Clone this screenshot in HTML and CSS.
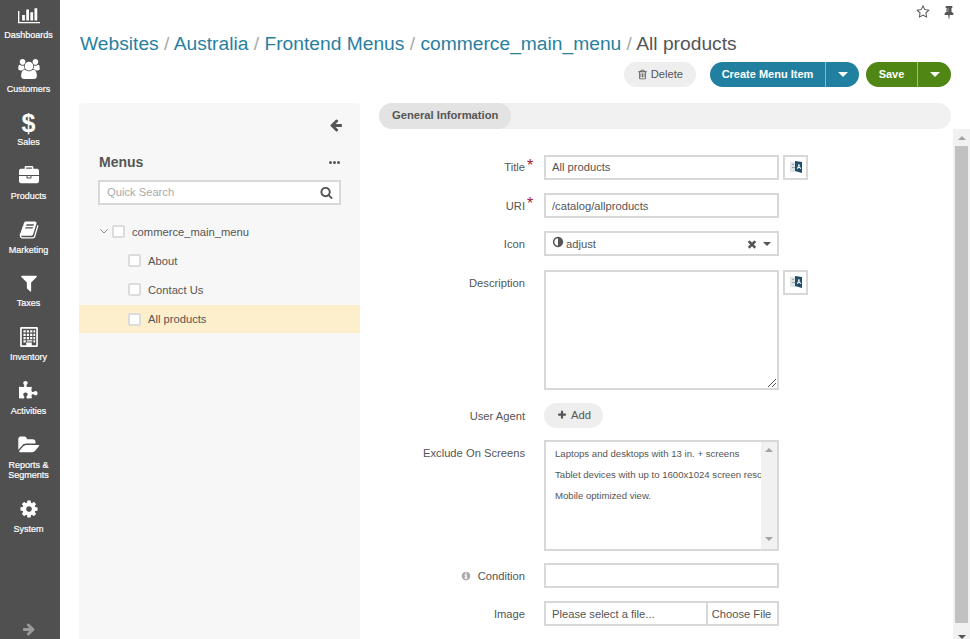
FILE: index.html
```html
<!DOCTYPE html>
<html lang="en">

<head>
    <meta charset="UTF-8">
    <title>All products - Frontend Menus</title>
    <link rel="stylesheet" href="styles.css">
</head>

<body>
    <nav class="sidebar">
        <a class="nav-item"><svg class="nav-icon" viewBox="0 0 2048 1792"><path d="M640 896v512h-256v-512h256zm384-512v1024h-256v-1024h256zm1024 1152v128h-2048v-1152h128v1024h1920zm-640-896v768h-256v-768h256zm384-384v1152h-256v-1152h256z"/></svg><span>Dashboards</span></a>
        <a class="nav-item"><svg class="nav-icon" viewBox="0 0 1920 1792"><path d="M593 896q-162 5-265 128h-134q-82 0-138-40.5t-56-118.5q0-353 124-353 6 0 43.5 21t97.5 42.5 119 21.5q67 0 133-23-5 37-5 66 0 139 81 256zm1071 637q0 120-73 189.5t-194 69.5h-874q-121 0-194-69.5t-73-189.5q0-53 3.5-103.5t14-109 26.5-108.5 43-97.5 62-81 85.5-53.5 111.5-20q10 0 43 21.5t73 48 107 48 135 21.5 135-21.5 107-48 73-48 43-21.5q61 0 111.5 20t85.5 53.5 62 81 43 97.5 26.5 108.5 14 109 3.5 103.5zm-1024-1277q0 106-75 181t-181 75-181-75-75-181 75-181 181-75 181 75 75 181zm704 384q0 159-112.5 271.5t-271.5 112.5-271.5-112.5-112.5-271.5 112.5-271.5 271.5-112.5 271.5 112.5 112.5 271.5zm576 225q0 78-56 118.5t-138 40.5h-134q-103-123-265-128 81-117 81-256 0-29-5-66 66 23 133 23 59 0 119-21.5t97.5-42.5 43.5-21q124 0 124 353zm-128-609q0 106-75 181t-181 75-181-75-75-181 75-181 181-75 181 75 75 181z"/></svg><span>Customers</span></a>
        <a class="nav-item"><b class="nav-glyph">$</b><span>Sales</span></a>
        <a class="nav-item"><svg class="nav-icon" viewBox="0 0 1792 1792"><path d="M640 256h512v-128h-512v128zm1152 640v480q0 66-47 113t-113 47h-1472q-66 0-113-47t-47-113v-480h672v160q0 26 19 45t45 19h320q26 0 45-19t19-45v-160h672zm-768 0v128h-256v-128h256zm768-480v384h-1792v-384q0-66 47-113t113-47h352v-160q0-40 28-68t68-28h576q40 0 68 28t28 68v160h352q66 0 113 47t47 113z"/></svg><span>Products</span></a>
        <a class="nav-item"><svg class="nav-icon" viewBox="0 0 1792 1792"><path d="M1703 478q40 57 18 129l-275 906q-19 64-76.5 107.5t-122.5 43.5h-923q-77 0-148.5-53.5t-99.5-131.5q-24-67-2-127 0-4 3-27t4-37q1-8-3-21.5t-3-19.5q2-11 8-21t16.5-23.5 16.5-23.5q23-38 45-91.5t30-91.5q3-10 .5-30t-.5-28q3-11 17-28t17-23q21-36 42-92t25-90q1-9-2.5-32t.5-28q4-13 22-30.5t22-22.5q19-26 42.5-84.5t27.5-96.5q1-8-3-25.5t-2-26.5q2-8 9-18t18-23 17-21q8-12 16.5-30.5t15-35 16-36 19.5-32 26.5-23.5 36-11.5 47.5 5.5l-1 3q38-9 51-9h761q74 0 114 56t18 130l-274 906q-36 119-71.5 153.5t-128.5 34.5h-869q-27 0-38 15-11 16-1 43 24 70 144 70h923q29 0 56-15.5t35-41.5l300-987q7-22 5-57 38 15 59 43zm-1064 2q-4 13 2 22.5t20 9.5h608q13 0 25.5-9.5t16.5-22.5l21-64q4-13-2-22.5t-20-9.5h-608q-13 0-25.5 9.5t-16.5 22.5zm-83 256q-4 13 2 22.5t20 9.5h608q13 0 25.5-9.5t16.5-22.5l21-64q4-13-2-22.5t-20-9.5h-608q-13 0-25.5 9.5t-16.5 22.5z"/></svg><span>Marketing</span></a>
        <a class="nav-item"><svg class="nav-icon" viewBox="0 0 1792 1792"><path d="M1595 295q17 41-14 70l-493 493v742q0 42-39 59-13 5-25 5-27 0-45-19l-256-256q-19-19-19-45v-486l-493-493q-31-29-14-70 17-39 59-39h1280q42 0 59 39z"/></svg><span>Taxes</span></a>
        <a class="nav-item"><svg class="nav-icon" viewBox="0 0 16 18"><path fill-rule="evenodd" d="M1 0h14a1 1 0 0 1 1 1v16a1 1 0 0 1-1 1H1a1 1 0 0 1-1-1V1a1 1 0 0 1 1-1zm.5 1.5v15h4V14h5v2.500h4v-15zM3 3h2v2H3zm3 0h2v2H6zm3 0h2v2H9zm3 0h1.500v2H12zM3 6h2v2H3zm3 0h2v2H6zm3 0h2v2H9zm3 0h1.500v2H12zM3 9h2v2H3zm3 0h2v2H6zm3 0h2v2H9zm3 0h1.500v2H12zM3 12h2v2H3zm9 0h1.500v2H12zM6 12h5v1H6z"/></svg><span>Inventory</span></a>
        <a class="nav-item"><svg class="nav-icon" viewBox="0 0 1792 1792"><path d="M1664 1098q0 81-44.500 135t-123.500 54q-41 0-77.500-17.500t-59-38-56.500-38-71-17.500q-110 0-110 124 0 39 16 115t15 115v5q-22 0-33 1-34 3-97.500 11.500t-115.500 13.500-98 5q-61 0-103-26.500t-42-83.500q0-37 17.500-71t38-56.500 38-59 17.500-77.500q0-79-54-123.500t-135-44.500q-84 0-143 45.500t-59 127.500q0 43 15 83t33.500 64.500 33.500 53 15 50.500q0 45-46 89-37 35-117 35-95 0-245-24-9-2-27.500-4t-27.500-4l-13-2q-2 0-4-1-2 0-2-1v-1024q2 1 17.500 3.500t34 5 21.500 3.500q150 24 245 24 80 0 117-35 46-44 46-89 0-22-15-50.500t-33.500-53-33.500-64.500-15-83q0-82 59-127.500t144-45.500q80 0 134 44.500t54 123.500q0 41-17.500 77.500t-38 59-38 56.500-17.500 71q0 57 42 83.500t103 26.500q64 0 180-15t163-17v2q-1 2-3.500 17.500t-5 34-3.500 21.500q-24 150-24 245 0 80 35 117 44 46 89 46 22 0 50.500-15t53-33.500 64.500-33.500 83-15q82 0 127.500 59t45.500 143z"/></svg><span>Activities</span></a>
        <a class="nav-item"><svg class="nav-icon" viewBox="0 0 1920 1792"><path d="M1879 952q0 31-31 66l-336 396q-43 51-120.500 86.500t-143.500 35.500h-1088q-34 0-60.500-13t-26.500-43q0-31 31-66l336-396q43-51 120.500-86.500t143.500-35.500h1088q34 0 60.500 13t26.500 43zm-343-344v160h-832q-94 0-197 47.500t-164 119.500l-337 396-5 6q0-4-.5-12.500t-.5-12.500v-960q0-92 66-158t158-66h320q92 0 158 66t66 158v32h544q92 0 158 66t66 158z"/></svg><span>Reports &amp; Segments</span></a>
        <a class="nav-item"><svg class="nav-icon" viewBox="0 0 1792 1792"><path d="M1152 896q0-106-75-181t-181-75-181 75-75 181 75 181 181 75 181-75 75-181zm512-109v222q0 12-8 23t-20 13l-185 28q-19 54-39 91 35 50 107 138 10 12 10 25t-9 23q-27 37-99 108t-94 71q-12 0-26-9l-138-108q-44 23-91 38-16 136-29 186-7 28-36 28h-222q-14 0-24.500-8.500t-11.500-21.500l-28-184q-49-16-90-37l-141 107q-10 9-25 9-14 0-25-11-126-114-165-168-7-10-7-23 0-12 8-23 15-21 51-66.500t54-70.500q-27-50-41-99l-183-27q-13-2-21-12.500t-8-23.500v-222q0-12 8-23t19-13l186-28q14-46 39-92-40-57-107-138-10-12-10-24 0-10 9-23 26-36 98.500-107.500t94.500-71.500q13 0 26 10l138 107q44-23 91-38 16-136 29-186 7-28 36-28h222q14 0 24.500 8.500t11.500 21.500l28 184q49 16 90 37l142-107q9-9 24-9 13 0 25 10 129 119 165 170 7 8 7 22 0 12-8 23-15 21-51 66.500t-54 70.500q26 50 41 98l183 28q13 2 21 12.500t8 23.500z"/></svg><span>System</span></a>
        <div class="nav-expand"><svg class="icon-14" viewBox="0 0 1792 1792"><path d="M1600 960q0 54-37 91l-651 651q-39 37-91 37-51 0-90-37l-75-75q-38-38-38-91t38-91l293-293h-704q-52 0-84.500-37.500t-32.500-90.500v-128q0-53 32.500-90.500t84.500-37.500h704l-293-294q-38-36-38-90t38-90l75-75q38-38 90-38 53 0 91 38l651 651q37 35 37 90z"/></svg></div>
    </nav>

    <main class="page">
        <div class="top-links">
            <svg class="icon-14" viewBox="0 0 1792 1792"><path d="M1201 1004l306-297-422-62-189-382-189 382-422 62 306 297-73 421 378-199 377 199zm527-357q0 22-26 48l-363 354 86 500q1 7 1 20 0 50-41 50-19 0-40-12l-449-236-449 236q-22 12-40 12-21 0-31.500-14.500t-10.500-35.500q0-6 2-20l86-500-364-354q-25-27-25-48 0-37 56-46l502-73 225-455q19-41 49-41t49 41l225 455 502 73q56 9 56 46z"/></svg>
            <svg class="icon-14" viewBox="0 0 1792 1792"><path d="M800 864v-448q0-14-9-23t-23-9-23 9-9 23v448q0 14 9 23t23 9 23-9 9-23zm672 352q0 26-19 45t-45 19h-429l-51 483q-2 12-10.500 20.500t-20.500 8.500h-1q-27 0-32-27l-76-485h-404q-26 0-45-19t-19-45q0-123 78.500-221.500t177.500-98.500v-512q-52 0-90-38t-38-90 38-90 90-38h640q52 0 90 38t38 90-38 90-90 38v512q99 0 177.500 98.500t78.500 221.500z"/></svg>
        </div>

        <h1 class="breadcrumbs">
            <a>Websites</a> <i>/</i> <a>Australia</a> <i>/</i> <a>Frontend Menus</a> <i>/</i> <a>commerce_main_menu</a> <i>/</i> All products
        </h1>

        <div class="actions">
            <button class="btn btn-plain" type="button">
                <svg class="icon-11" viewBox="0 0 1792 1792"><path d="M704 736v576q0 14-9 23t-23 9h-64q-14 0-23-9t-9-23v-576q0-14 9-23t23-9h64q14 0 23 9t9 23zm256 0v576q0 14-9 23t-23 9h-64q-14 0-23-9t-9-23v-576q0-14 9-23t23-9h64q14 0 23 9t9 23zm256 0v576q0 14-9 23t-23 9h-64q-14 0-23-9t-9-23v-576q0-14 9-23t23-9h64q14 0 23 9t9 23zm128 724v-948h-896v948q0 22 7 40.500t14.500 27 10.500 8.500h832q3 0 10.500-8.500t14.500-27 7-40.500zm-672-1076h448l-48-117q-7-9-17-11h-317q-10 2-17 11zm928 32v64q0 14-9 23t-23 9h-96v948q0 83-47 143.500t-113 60.500h-832q-66 0-113-58.500t-47-141.500v-952h-96q-14 0-23-9t-9-23v-64q0-14 9-23t23-9h309l70-167q15-37 54-63t79-26h320q40 0 79 26t54 63l70 167h309q14 0 23 9t9 23z"/></svg>
                Delete
            </button>
            <div class="btn-group btn-blue">
                <button class="btn-main btn-main-create" type="button">Create Menu Item</button>
                <button class="btn-caret" type="button"><span class="caret"></span></button>
            </div>
            <div class="btn-group btn-green">
                <button class="btn-main btn-main-save" type="button">Save</button>
                <button class="btn-caret" type="button"><span class="caret"></span></button>
            </div>
        </div>

        <div class="content">
            <aside class="tree-panel">
                <div class="tree-collapse"><svg class="icon-14" viewBox="0 0 1792 1792"><path d="M1664 896v128q0 53-32.500 90.500t-84.500 37.500h-704l293 294q38 36 38 90t-38 90l-75 75q-38 38-90 38-53 0-91-38l-651-652q-37-37-37-90 0-52 37-91l651-650q38-38 91-38 52 0 90 38l75 74q38 38 38 91t-38 91l-293 293h704q52 0 84.500 37.500t32.500 90.500z"/></svg></div>
                <div class="tree-head">
                    <h2>Menus</h2>
                    <span class="dots"><b></b><b></b><b></b></span>
                </div>
                <div class="tree-search">
                    <span>Quick Search</span>
                    <svg class="icon-13" viewBox="0 0 1792 1792"><path d="M1216 832q0-185-131.500-316.500t-316.500-131.500-316.500 131.500-131.500 316.500 131.500 316.500 316.500 131.500 316.500-131.500 131.500-316.500zm512 832q0 52-38 90t-90 38q-54 0-90-38l-343-342q-179 124-399 124-143 0-273.500-55.500t-225-150-150-225-55.500-273.500 55.500-273.500 150-225 225-150 273.500-55.500 273.500 55.500 225 150 150 225 55.500 273.500q0 220-124 399l343 343q37 37 37 90z"/></svg>
                </div>
                <ul class="tree">
                    <li class="tree-row tree-root">
                        <svg class="tree-chevron" viewBox="0 0 8 5"><path d="M.5.500 4 4 7.500.500" fill="none" stroke="#8a8a8a"/></svg>
                        <span class="check"></span>commerce_main_menu
                    </li>
                    <li class="tree-row"><span class="check"></span>About</li>
                    <li class="tree-row"><span class="check"></span>Contact Us</li>
                    <li class="tree-row tree-active"><span class="check"></span>All products</li>
                </ul>
            </aside>

            <section class="details">
                <div class="tabs"><span class="tab">General Information</span></div>
                <div class="details-body">
                    <form class="form">
                        <div class="row">
                            <label class="lbl">Title<em>*</em></label>
                            <div class="input">All products</div>
                            <span class="translate"><svg viewBox="0 0 14 14"><path d="M1 2h5l1 1v9H2l-1-1z" fill="#dfe3e6"/><path d="M3 4h2v1H3zM3 7h3v1H3z" fill="#9aa7ae"/><path d="M6 1l7 1v11l-7-2z" fill="#1f4e6b"/><path d="M8 9l1.500-5h.7L12 9h-1l-.3-1H9.300L9 9zm1.500-2h1L10 5.300z" fill="#fff"/></svg></span>
                        </div>
                        <div class="row">
                            <label class="lbl">URI<em>*</em></label>
                            <div class="input">/catalog/allproducts</div>
                        </div>
                        <div class="row">
                            <label class="lbl">Icon</label>
                            <div class="input select">
                                <svg class="icon-12 select-icon" viewBox="0 0 1792 1792"><path d="M896 1440v-1088q-148 0-273 73t-198 198-73 273 73 273 198 198 273 73zm768-544q0 209-103 385.500t-279.500 279.500-385.500 103-385.500-103-279.500-279.500-103-385.500 103-385.500 279.500-279.500 385.500-103 385.500 103 279.500 279.500 103 385.500z"/></svg>
                                <span class="select-value">adjust</span>
                                <svg class="icon-12" viewBox="0 0 1792 1792"><path d="M1490 1322q0 40-28 68l-136 136q-28 28-68 28t-68-28l-294-294-294 294q-28 28-68 28t-68-28l-136-136q-28-28-28-68t28-68l294-294-294-294q-28-28-28-68t28-68l136-136q28-28 68-28t68 28l294 294 294-294q28-28 68-28t68 28l136 136q28 28 28 68t-28 68l-294 294 294 294q28 28 28 68z"/></svg>
                                <span class="caret caret-dark"></span>
                            </div>
                        </div>
                        <div class="row">
                            <label class="lbl lbl-low">Description</label>
                            <div class="input textarea">
                                <svg class="resize-grip" viewBox="0 0 8 8"><path d="M8 0 0 8M8 4 4 8" stroke="#555"/></svg>
                            </div>
                            <span class="translate"><svg viewBox="0 0 14 14"><path d="M1 2h5l1 1v9H2l-1-1z" fill="#dfe3e6"/><path d="M3 4h2v1H3zM3 7h3v1H3z" fill="#9aa7ae"/><path d="M6 1l7 1v11l-7-2z" fill="#1f4e6b"/><path d="M8 9l1.500-5h.7L12 9h-1l-.3-1H9.300L9 9zm1.500-2h1L10 5.300z" fill="#fff"/></svg></span>
                        </div>
                        <div class="row row-tight">
                            <label class="lbl">User Agent</label>
                            <button class="btn btn-plain btn-add" type="button">
                                <svg class="icon-10" viewBox="0 0 1792 1792"><path d="M1600 736v192q0 40-28 68t-68 28h-416v416q0 40-28 68t-68 28h-192q-40 0-68-28t-28-68v-416h-416q-40 0-68-28t-28-68v-192q0-40 28-68t68-28h416v-416q0-40 28-68t68-28h192q40 0 68 28t28 68v416h416q40 0 68 28t28 68z"/></svg>
                                Add
                            </button>
                        </div>
                        <div class="row row-tight">
                            <label class="lbl">Exclude On Screens</label>
                            <div class="input listbox">
                                <ul class="listbox-items">
                                    <li>Laptops and desktops with 13 in. + screens</li>
                                    <li>Tablet devices with up to 1600x1024 screen resolution</li>
                                    <li>Mobile optimized view.</li>
                                </ul>
                                <div class="listbox-bar"><span class="arrow-up"></span><span class="arrow-down"></span></div>
                            </div>
                        </div>
                        <div class="row">
                            <label class="lbl"><svg class="icon-10 info" viewBox="0 0 1792 1792"><path d="M1152 1376v-160q0-14-9-23t-23-9h-96v-512q0-14-9-23t-23-9h-320q-14 0-23 9t-9 23v160q0 14 9 23t23 9h96v320h-96q-14 0-23 9t-9 23v160q0 14 9 23t23 9h448q14 0 23-9t9-23zm-128-896v-160q0-14-9-23t-23-9h-192q-14 0-23 9t-9 23v160q0 14 9 23t23 9h192q14 0 23-9t9-23zm640 416q0 209-103 385.500t-279.500 279.500-385.500 103-385.500-103-279.500-279.500-103-385.500 103-385.500 279.500-279.500 385.500-103 385.500 103 279.500 279.500 103 385.500z"/></svg>Condition</label>
                            <div class="input"></div>
                        </div>
                        <div class="row">
                            <label class="lbl">Image</label>
                            <div class="input file"><span class="file-name">Please select a file...</span><span class="file-btn">Choose File</span></div>
                        </div>
                    </form>
                    <div class="scrollbar"><span class="arrow-up"></span><div class="thumb"></div><span class="arrow-down"></span></div>
                </div>
            </section>
        </div>
    </main>
</body>

</html>
```

FILE: styles.css
```css
* {
    box-sizing: border-box;
}

html,
body {
    height: 100%;
}

body {
    display: flex;
    margin: 0;
    overflow: hidden;
    font-family: "Liberation Sans", Arial, sans-serif;
    font-size: 11.2px;
    color: #555;
    background-color: #fff;
}

svg {
    display: block;
    fill: currentColor;
    flex: none;
}

.icon-10 { width: 10px; height: 10px; }
.icon-11 { width: 11px; height: 11px; }
.icon-12 { width: 12px; height: 12px; }
.icon-13 { width: 13px; height: 13px; }
.icon-14 { width: 14px; height: 14px; }

/* left navigation */
.sidebar {
    position: relative;
    width: 60px;
    flex: none;
    padding-right: 3px;
    color: #fff;
    background-color: #505050;
}

.nav-item {
    display: flex;
    flex-direction: column;
    align-items: center;
    padding: 5px 0 13.2px;
    font-size: 9px;
    line-height: 10.5px;
    text-align: center;
}

.nav-item span {
    margin-top: 5px;
    padding: 0 4px;
    -webkit-text-stroke: 0.2px #fff;
}

.nav-icon {
    width: 22px;
    height: 20px;
}

.nav-glyph {
    height: 20px;
    font-size: 25px;
    line-height: 22px;
}

.nav-expand {
    position: absolute;
    left: 22px;
    bottom: 3px;
    color: #9a9a9a;
}

/* header */
.page {
    flex: 1;
    min-width: 0;
    padding-left: 19px;
}

.top-links {
    display: flex;
    justify-content: flex-end;
    gap: 12px;
    height: 32px;
    padding: 5px 14px 0 0;
    color: #555;
}

.breadcrumbs {
    margin: 0 0 0 1px;
    font-size: 19.23px;
    font-weight: normal;
    line-height: 23px;
    color: #555;
}

.breadcrumbs a {
    color: #2a7f9f;
}

.breadcrumbs i {
    font-style: normal;
    color: #aaa;
}

.actions {
    display: flex;
    justify-content: flex-end;
    gap: 7px;
    height: 25px;
    margin: 7px 19px 16px 0;
}

.btn {
    display: flex;
    align-items: center;
    gap: 3px;
    height: 25px;
    padding: 0 13px 1px;
    border: 0;
    border-radius: 13px;
    font: inherit;
    color: #555;
    background-color: #eee;
}

.btn-group {
    display: flex;
    height: 25px;
    border-radius: 13px;
    overflow: hidden;
    color: #fff;
}

.btn-blue {
    margin-left: 7px;
    background-color: #217fa0;
}

.btn-green {
    background-color: #4f8614;
}

.btn-main,
.btn-caret {
    border: 0;
    padding: 0;
    color: #fff;
    background: none;
    font: inherit;
    font-size: 11px;
    font-weight: bold;
}

.btn-main {
    padding-bottom: 1px;
}

.btn-main-create { width: 115px; }
.btn-main-save { width: 51px; }

.btn-caret {
    display: flex;
    align-items: center;
    justify-content: center;
    width: 34px;
    border-left: 1px solid rgba(255, 255, 255, 0.45);
}

.caret {
    display: block;
    width: 0;
    height: 0;
    border-top: 5px solid #fff;
    border-left: 5px solid transparent;
    border-right: 5px solid transparent;
}

/* tree */
.content {
    display: flex;
    gap: 19px;
    height: 536px;
}

.tree-panel {
    width: 281px;
    flex: none;
    padding-top: 15px;
    border-radius: 4px 4px 0 0;
    background-color: #f7f7f7;
}

.tree-collapse {
    display: flex;
    justify-content: flex-end;
    height: 14px;
    padding-right: 17px;
    color: #555;
}

.tree-head {
    display: flex;
    justify-content: space-between;
    align-items: center;
    height: 18px;
    margin: 21px 20px 0;
}

.tree-head h2 {
    margin: 0;
    font-size: 14px;
    color: #555;
}

.dots {
    display: flex;
    gap: 1px;
}

.dots b {
    width: 3px;
    height: 3px;
    border-radius: 50%;
    background-color: #555;
}

.tree-search {
    display: flex;
    justify-content: space-between;
    align-items: center;
    height: 25px;
    margin: 9px 19px 0;
    padding: 0 6px 1px 7px;
    border: 2px solid #d8d8d8;
    color: #aaa;
    background-color: #fff;
}

.tree-search svg {
    color: #555;
}

.tree {
    margin: 12px 0 0;
    padding: 0;
    list-style: none;
}

.tree-row {
    display: flex;
    align-items: center;
    height: 29px;
    padding-left: 49px;
    color: #555;
}

.tree-root {
    padding-left: 21px;
}

.tree-chevron {
    width: 8px;
    height: 5px;
    margin-right: 4px;
}

.tree-active {
    height: 28px;
    margin-top: 1px;
    background-color: #fdefcb;
}

.check {
    width: 13px;
    height: 13px;
    margin-right: 7px;
    border: 2px solid #dcdcdc;
    border-radius: 2px;
    background-color: #fff;
}

/* details */
.details {
    flex: 1;
    min-width: 0;
}

.tabs {
    height: 26px;
    margin-right: 19px;
    border-radius: 13px;
    background-color: #f1f1f1;
}

.tab {
    display: inline-block;
    height: 26px;
    padding: 0 13px;
    border-radius: 13px;
    font-weight: bold;
    line-height: 24px;
    color: #555;
    background-color: #e3e3e3;
}

.details-body {
    display: flex;
    justify-content: space-between;
    height: 510px;
}

.form {
    flex: 1;
    padding-top: 25.8px;
}

.row {
    display: flex;
    align-items: flex-start;
    margin-bottom: 13.33px;
}

.row-tight {
    margin-bottom: 12px;
}

.lbl {
    position: relative;
    display: flex;
    justify-content: flex-end;
    align-items: center;
    width: 146px;
    height: 25px;
    flex: none;
    margin-right: 19px;
    color: #555;
}

.lbl-low {
    padding-top: 1px;
}

.lbl em {
    position: absolute;
    left: 148px;
    top: 2px;
    font-size: 16px;
    font-style: normal;
    color: #a5182c;
}

.info {
    margin-right: 7px;
    color: #aaa;
}

.input {
    display: flex;
    align-items: center;
    width: 235px;
    height: 25px;
    padding: 0 6px;
    border: 2px solid #d8d8d8;
    color: #555;
    background-color: #fff;
}

.select-icon {
    margin: -3px 2px 0 0;
}

.select-value {
    flex: 1;
}

.caret-dark {
    margin-left: 5px;
    border-top-color: #555;
    border-top-width: 4px;
    border-left-width: 4px;
    border-right-width: 4px;
}

.textarea {
    position: relative;
    height: 120px;
}

.resize-grip {
    position: absolute;
    right: 1px;
    bottom: 1px;
    width: 8px;
    height: 8px;
}

.translate {
    display: flex;
    align-items: center;
    justify-content: center;
    width: 25px;
    height: 25px;
    margin-left: 4px;
    border: 2px solid #d8d8d8;
}

.translate svg {
    width: 14px;
    height: 14px;
}

.btn-add {
    width: 59px;
    gap: 4px;
}

.listbox {
    align-items: stretch;
    height: 111px;
    padding: 0;
}

.listbox-items {
    flex: 1;
    min-width: 0;
    margin: 0;
    padding: 1px 0 0 9px;
    overflow: hidden;
    list-style: none;
    font-size: 9.6px;
    white-space: nowrap;
}

.listbox-items li {
    height: 21px;
    line-height: 21px;
}

.listbox-bar {
    display: flex;
    flex-direction: column;
    justify-content: space-between;
    align-items: center;
    width: 16px;
    padding: 6px 0 8px;
    background-color: #f1f1f1;
}

.arrow-up {
    width: 0;
    height: 0;
    border-bottom: 4px solid #a3a3a3;
    border-left: 4px solid transparent;
    border-right: 4px solid transparent;
}

.arrow-down {
    width: 0;
    height: 0;
    border-top: 4px solid #a3a3a3;
    border-left: 4px solid transparent;
    border-right: 4px solid transparent;
}

.file {
    padding: 0;
}

.file-name {
    flex: 1;
    padding-left: 6px;
}

.file-btn {
    display: flex;
    align-items: center;
    justify-content: center;
    width: 71px;
    height: 100%;
    padding-right: 2px;
    border-left: 2px solid #d8d8d8;
}

/* page scrollbar */
.scrollbar {
    display: flex;
    flex-direction: column;
    align-items: center;
    width: 17px;
    flex: none;
    padding-top: 7px;
    background-color: #f1f1f1;
}

.thumb {
    width: 13px;
    height: 477px;
    margin: 6px 0 12px;
    flex: none;
    background-color: #c1c1c1;
}

.scrollbar .arrow-down {
    border-top-color: #555;
}
```
